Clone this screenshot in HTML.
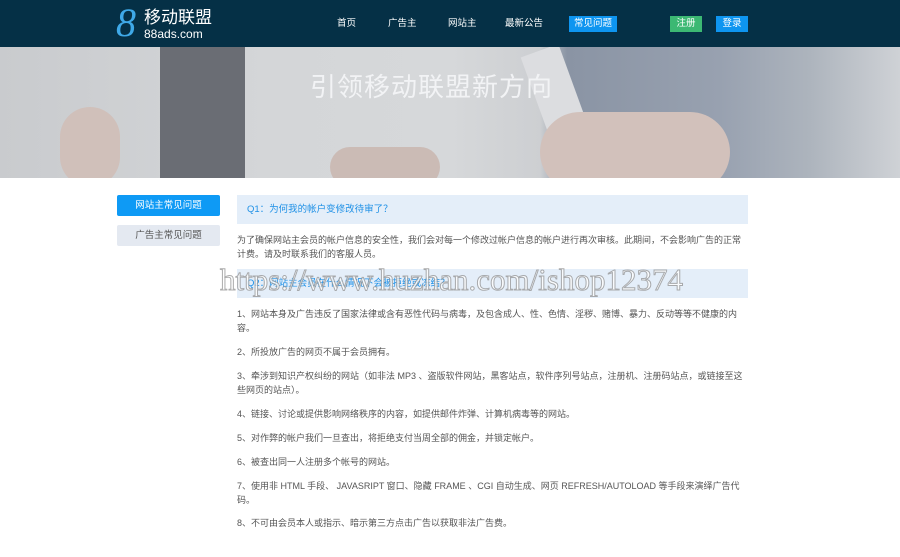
<!DOCTYPE html>
<html><head><meta charset="utf-8"><style>
*{margin:0;padding:0;box-sizing:border-box}
body{width:900px;height:557px;overflow:hidden;background:#fff;font-family:"Liberation Sans","Noto Sans CJK SC",sans-serif;position:relative}
.hd{position:absolute;left:0;top:0;width:900px;height:47px;background:#053046}
.logo8{position:absolute;left:116px;top:2px;font-family:"Liberation Serif",serif;font-style:italic;font-size:40px;color:#3fa9e8;line-height:42px}
.lt{position:absolute;left:144px;top:9px;color:#fff;font-size:17px;line-height:18px}
.ls{position:absolute;left:144px;top:27px;color:#fff;font-size:12px;line-height:14px}
.nav{position:absolute;top:17px;color:#fff;font-size:9.5px;line-height:14px}
.btn{position:absolute;top:16px;height:16px;color:#fff;font-size:9.5px;line-height:16px;text-align:center}
.ban{position:absolute;left:0;top:47px;width:900px;height:131px;background:linear-gradient(90deg,#c9cbce 0%,#d4d6d8 30%,#d6d8da 50%,#cdcfd2 60%,#8a94a4 63%,#98a1b0 80%,#adb4bd 90%,#cfd2d6 100%);overflow:hidden}
.ban div{position:absolute}
.ban h1{position:absolute;left:310px;top:20px;font-weight:normal;font-size:26px;color:#f2f3f5;letter-spacing:1px}
.side{position:absolute;left:117px;width:103px;height:21px;font-size:9.5px;line-height:21px;text-align:center;border-radius:2px}
.q{position:absolute;left:237px;width:511px;height:29px;background:#e4eef9;color:#1e90e6;font-size:9.5px;line-height:29px;padding-left:10px}
.p{position:absolute;left:237px;width:513px;font-size:9px;line-height:14px;color:#555}
.wm{position:absolute;left:220px;top:262px;font-family:"Liberation Serif",serif;font-size:31px;color:#fff;-webkit-text-stroke:1px #999;opacity:.8;white-space:nowrap}
</style></head><body>
<div class="hd">
<div class="logo8">8</div><div class="lt">移动联盟</div><div class="ls">88ads.com</div>
<div class="nav" style="left:337px">首页</div>
<div class="nav" style="left:388px">广告主</div>
<div class="nav" style="left:448px">网站主</div>
<div class="nav" style="left:505px">最新公告</div>
<div class="btn" style="left:569px;width:48px;background:#0e95f0">常见问题</div>
<div class="btn" style="left:670px;width:32px;background:#3cb873">注册</div>
<div class="btn" style="left:716px;width:32px;background:#0e95f0">登录</div>
</div>
<div class="ban">
<div style="left:160px;top:0;width:85px;height:131px;background:#6a6d74"></div>
<div style="left:540px;top:0;width:40px;height:120px;background:#dcdde0;transform:rotate(-20deg)"></div>
<div style="left:60px;top:60px;width:60px;height:80px;border-radius:30px;background:#d0c0ba"></div>
<div style="left:540px;top:65px;width:190px;height:80px;border-radius:40px;background:#d2c1bb"></div>
<div style="left:330px;top:100px;width:110px;height:40px;border-radius:20px;background:#cbbbb5"></div>
<h1>引领移动联盟新方向</h1></div>
<div class="side" style="top:195px;background:#0e9af5;color:#fff">网站主常见问题</div>
<div class="side" style="top:225px;background:#e4e9f1;color:#555">广告主常见问题</div>
<div class="q" style="top:195px">Q1：为何我的帐户变修改待审了？</div>
<div class="p" style="top:233px;width:508px">为了确保网站主会员的帐户信息的安全性，我们会对每一个修改过帐户信息的帐户进行再次审核。此期间，不会影响广告的正常计费。请及时联系我们的客服人员。</div>
<div class="q" style="top:269px">Q2：网站主会员在什么情况下会被拒绝或冻结？</div>
<div class="p" style="top:307px">1、网站本身及广告违反了国家法律或含有恶性代码与病毒，及包含成人、性、色情、淫秽、赌博、暴力、反动等等不健康的内容。</div>
<div class="p" style="top:345px">2、所投放广告的网页不属于会员拥有。</div>
<div class="p" style="top:369px">3、牵涉到知识产权纠纷的网站（如非法 MP3 、盗版软件网站，黑客站点，软件序列号站点，注册机、注册码站点，或链接至这些网页的站点）。</div>
<div class="p" style="top:407px">4、链接、讨论或提供影响网络秩序的内容，如提供邮件炸弹、计算机病毒等的网站。</div>
<div class="p" style="top:431px">5、对作弊的帐户我们一旦查出，将拒绝支付当周全部的佣金，并锁定帐户。</div>
<div class="p" style="top:455px">6、被查出同一人注册多个帐号的网站。</div>
<div class="p" style="top:479px">7、使用非 HTML 手段、 JAVASRIPT 窗口、隐藏 FRAME 、CGI 自动生成、网页 REFRESH/AUTOLOAD 等手段来演绎广告代码。</div>
<div class="p" style="top:516px">8、不可由会员本人或指示、暗示第三方点击广告以获取非法广告费。</div>
<div class="wm">https://www.huzhan.com/ishop12374</div>
</body></html>
